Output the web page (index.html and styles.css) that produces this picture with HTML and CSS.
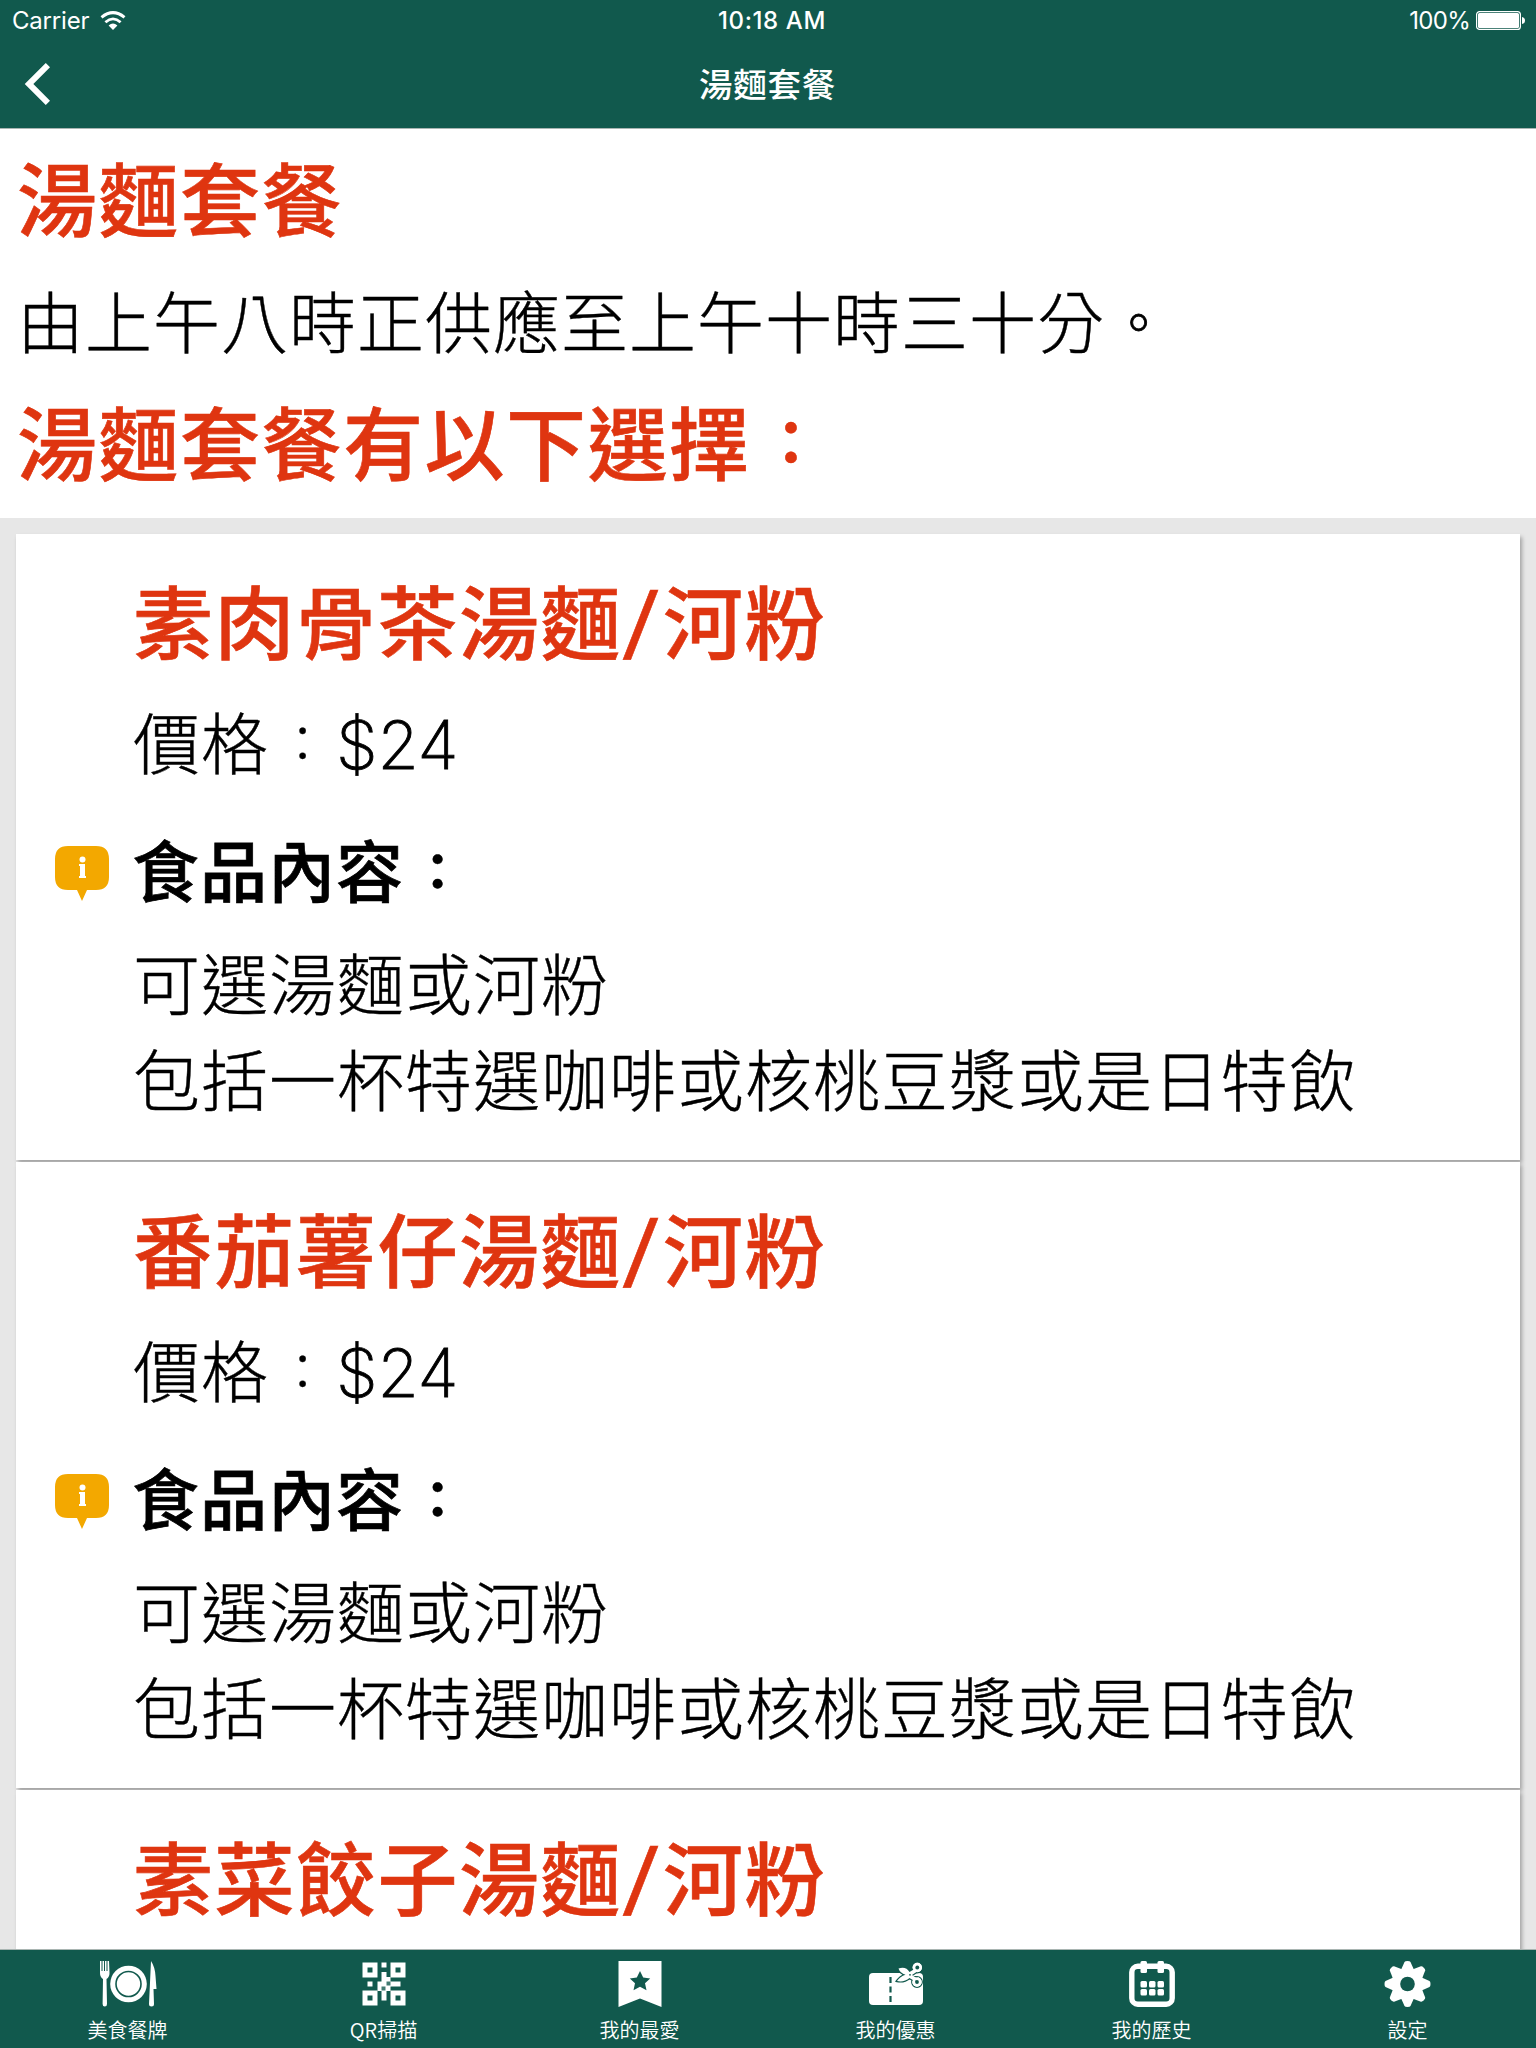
FILE: index.html
```html
<!DOCTYPE html>
<html lang="zh-Hant">
<head>
    <title>湯麵套餐</title>
    <meta charset="UTF-8">
    <link rel="stylesheet" href="styles.css">
</head>
<body>
    <header class="header">
        <div class="status-bar">
            <div class="status-left">
                <span class="carrier">Carrier</span>
                <svg class="wifi" width="26" height="20" viewBox="0 0 26 20">
                    <path d="M1.500 6.300Q13-3 24.500 6.300" fill="none" stroke="#fff" stroke-width="3"/>
                    <path d="M5.400 11.200Q13 4.600 20.600 11.200" fill="none" stroke="#fff" stroke-width="2.800"/>
                    <path d="M8.600 14.400Q13 10.400 17.400 14.400L13 19Z" fill="#fff"/>
                </svg>
            </div>
            <span class="clock">10:18 AM</span>
            <div class="status-right">
                <span class="percent">100%</span>
                <svg width="50" height="20" viewBox="0 0 50 20">
                    <rect x=".6" y=".6" width="43.800" height="17.800" rx="3" fill="none" stroke="#fff" stroke-width="1.200"/>
                    <rect x="2" y="2" width="41" height="15" rx="1.500" fill="#fff"/>
                    <path d="M46 6q3 .5 3 3.500T46 13z" fill="#fff"/>
                </svg>
            </div>
        </div>
        <div class="title-bar">
            <a href="#" class="back">
                <svg width="26" height="42" viewBox="0 0 26 42">
                    <path d="M23.900 2.200L5 21l18.900 18.800" fill="none" stroke="#fff" stroke-width="6"/>
                </svg>
            </a>
            <span class="title">湯麵套餐</span>
        </div>
    </header>

    <main class="content">
        <section class="intro">
            <h1>湯麵套餐</h1>
            <p>由上午八時正供應至上午十時三十分<span class="stop">。</span></p>
            <h1>湯麵套餐有以下選擇<span class="colon">：</span></h1>
        </section>

        <div class="list">
            <article class="card">
                <h2>素肉骨茶湯麵<span class="slash">/</span>河粉</h2>
                <p class="price">價格<span class="colon">：</span><span class="num">$24</span></p>
                <div class="label">
                    <svg class="info" width="56" height="58" viewBox="0 0 56 58">
                        <path d="M14 1H42Q55 1 55 14V32Q55 45 42 45H33L28 56L23 45H14Q1 45 1 32V14Q1 1 14 1Z" fill="#f3a800"/>
                        <circle cx="28.500" cy="14.500" r="3" fill="#fff"/>
                        <path d="M25 19H31V31H32V33H25V31H26V21H25Z" fill="#fff"/>
                    </svg>
                    <h3>食品內容<span class="colon">：</span></h3>
                </div>
                <p>可選湯麵或河粉<br>包括一杯特選咖啡或核桃豆漿或是日特飲</p>
            </article>

            <article class="card">
                <h2>番茄薯仔湯麵<span class="slash">/</span>河粉</h2>
                <p class="price">價格<span class="colon">：</span><span class="num">$24</span></p>
                <div class="label">
                    <svg class="info" width="56" height="58" viewBox="0 0 56 58">
                        <path d="M14 1H42Q55 1 55 14V32Q55 45 42 45H33L28 56L23 45H14Q1 45 1 32V14Q1 1 14 1Z" fill="#f3a800"/>
                        <circle cx="28.500" cy="14.500" r="3" fill="#fff"/>
                        <path d="M25 19H31V31H32V33H25V31H26V21H25Z" fill="#fff"/>
                    </svg>
                    <h3>食品內容<span class="colon">：</span></h3>
                </div>
                <p>可選湯麵或河粉<br>包括一杯特選咖啡或核桃豆漿或是日特飲</p>
            </article>

            <article class="card">
                <h2>素菜餃子湯麵<span class="slash">/</span>河粉</h2>
            </article>
        </div>
    </main>

    <nav class="tabs">
        <a href="#" class="tab">
            <svg width="58" height="48" viewBox="0 0 58 48">
                <g fill="#fff">
                    <path d="M1 1h1.500v10h1V1h1.500v10h1V1h1.500v10h1V1H10l.5 12q0 4-3 6l.5 25q0 2.500-2.200 2.500T3.600 44L4 19q-3-2-3-6z"/>
                    <path d="M52 1q4 6 4.500 15l1 13H54.500l.5 15q0 2.500-2.500 2.500T50 44z"/>
                    <circle cx="29.500" cy="24" r="18.300"/>
                </g>
                <circle cx="29.500" cy="24" r="12.500" fill="none" stroke="#11594d" stroke-width="1.600"/>
            </svg>
            <span>美食餐牌</span>
        </a>
        <a href="#" class="tab">
            <svg width="44" height="48" viewBox="0 0 44 48">
                <path fill="#fff" fill-rule="evenodd" d="M.5 2.500h15v15h-15zM5.500 7.500v5h5v-5zM28.500 2.500h15v15h-15zM33.500 7.500v5h5v-5zM.5 30.500h15v15h-15zM5.500 35.500v5h5v-5zM28.500 30.500h15v15h-15zM33.500 35.500v5h5v-5z"/>
                <path fill="#fff" d="M19.500 2.500h5v5h-5zM5.500 21.500h5v5h-5zM19.500 12h5v5h4v4.500h10v5H28.500v4.500h-4v9.500h-5v-9.500h-4v-9.500h4z"/>
                <path fill="#11594d" d="M19.500 26.500h4v4h-4zM24.500 21.500h4v4h-4z" opacity=".8"/>
            </svg>
            <span>QR掃描</span>
        </a>
        <a href="#" class="tab">
            <svg width="44" height="48" viewBox="0 0 44 48">
                <path fill="#fff" d="M.5 1h43v46L22 38.500.5 47z"/>
                <path fill="#11594d" d="M22 11l3.200 6.600 7 .8-5.200 4.900 1.500 7L22 26.700l-6.500 3.600 1.500-7-5.200-4.900 7-.8z"/>
            </svg>
            <span>我的最愛</span>
        </a>
        <a href="#" class="tab">
            <svg width="56" height="48" viewBox="0 0 56 48">
                <rect x="1" y="13" width="54" height="32" rx="4" fill="#fff"/>
                <path d="M22.500 17v26" stroke="#11594d" stroke-width="2.200" stroke-dasharray="6 3.500"/>
                <g fill="#fff" stroke="#11594d" stroke-width="2.400" paint-order="stroke">
                    <circle cx="49.300" cy="7.500" r="4.700"/>
                    <circle cx="49" cy="22" r="4.700"/>
                    <path d="M30.500 8.500Q38 6 41.500 12L46.500 9l2 3-4.500 3 4.500 3-2 3-5-3Q36 22.500 29 21 32 16.500 37.500 14.800 32 13 30.500 8.500z"/>
                </g>
                <g fill="none" stroke="#fff" stroke-width="2.800">
                    <circle cx="49.300" cy="7.500" r="3.300"/>
                    <circle cx="49" cy="22" r="3.300"/>
                </g>
                <circle cx="49.300" cy="7.500" r="1.900" fill="#11594d"/>
                <circle cx="49" cy="22" r="1.900" fill="#11594d"/>
                <circle cx="42" cy="14.800" r=".9" fill="#11594d"/>
            </svg>
            <span>我的優惠</span>
        </a>
        <a href="#" class="tab">
            <svg width="46" height="48" viewBox="0 0 46 48">
                <rect x="2.800" y="6.300" width="40.400" height="37.900" rx="6" fill="none" stroke="#fff" stroke-width="5.400"/>
                <g fill="#fff">
                    <rect x="11.500" y="1" width="6.500" height="12" rx="1.500"/>
                    <rect x="28.500" y="1" width="6.500" height="12" rx="1.500"/>
                    <rect x="11.500" y="21" width="6.500" height="6.500" rx="1.500"/>
                    <rect x="20" y="21" width="6.500" height="6.500" rx="1.500"/>
                    <rect x="28.500" y="21" width="6.500" height="6.500" rx="1.500"/>
                    <rect x="11.500" y="29" width="6.500" height="6.500" rx="1.500"/>
                    <rect x="20" y="29" width="6.500" height="6.500" rx="1.500"/>
                    <rect x="28.500" y="29" width="6.500" height="6.500" rx="1.500"/>
                </g>
            </svg>
            <span>我的歷史</span>
        </a>
        <a href="#" class="tab">
            <svg width="48" height="48" viewBox="-23.500 -24 48 48">
                <g fill="#fff">
                    <circle r="15.500"/>
                    <path id="tooth" d="M-7-13L-3-22Q-2.500-23 0-23T3-22L7-13z"/>
                    <use href="#tooth" transform="rotate(45)"/>
                    <use href="#tooth" transform="rotate(90)"/>
                    <use href="#tooth" transform="rotate(135)"/>
                    <use href="#tooth" transform="rotate(180)"/>
                    <use href="#tooth" transform="rotate(225)"/>
                    <use href="#tooth" transform="rotate(270)"/>
                    <use href="#tooth" transform="rotate(315)"/>
                </g>
                <circle r="7.300" fill="#11594d"/>
            </svg>
            <span>設定</span>
        </a>
    </nav>
</body>
</html>
```
FILE: styles.css
```css
* {
    margin: 0;
    padding: 0;
    box-sizing: border-box;
}

body {
    font-family: 'Noto Sans CJK TC', sans-serif;
    background: #fff;
    color: #000;
    height: 2048px;
    display: flex;
    flex-direction: column;
    overflow: hidden;
}

svg {
    display: block;
}

.header {
    background: #11594d;
    color: #fff;
    height: 129px;
    border-bottom: 1px solid #a9b5b2;
    flex-shrink: 0;
}

.status-bar {
    display: grid;
    grid-template-columns: 1fr auto 1fr;
    align-items: center;
    height: 41px;
    padding: 0 10px 0 12px;
    font-family: Inter, sans-serif;
    font-size: 24px;
}

.status-left,
.status-right {
    display: flex;
    align-items: center;
}

.status-left {
    gap: 11px;
}

.status-right {
    justify-content: flex-end;
    gap: 6px;
}

.carrier {
    letter-spacing: -0.2px;
}

.percent {
    letter-spacing: -0.7px;
}

.clock {
    padding-left: 6px;
    font-weight: 500;
    letter-spacing: 0.6px;
}

.title-bar {
    display: grid;
    grid-template-columns: 1fr auto 1fr;
    align-items: center;
    height: 86px;
    padding: 0 25px 0 24px;
}

.title {
    font-size: 33.500px;
    font-weight: 500;
    line-height: 84px;
    height: 86px;
    letter-spacing: 0.7px;
}

.content {
    flex: 1;
    min-height: 0;
    overflow: hidden;
}

.intro {
    height: 389px;
    padding: 6px 17px 0;
}

h1,
h2 {
    color: #df3510;
    font-size: 80px;
    font-weight: 500;
    line-height: 120px;
    letter-spacing: 1.500px;
    -webkit-text-stroke: 0.6px;
}

p {
    font-size: 67px;
    font-weight: 300;
    line-height: 96px;
    letter-spacing: 1px;
    -webkit-text-stroke: 0.4px;
}

.intro p {
    margin: 16px 0 12px;
}

.colon,
.stop {
    display: inline-block;
    width: 1em;
    line-height: 1;
    text-align: center;
}

.colon {
    transform: scale(0.75);
}

h1 .colon,
h3 .colon {
    font-weight: 700;
}

.stop {
    transform: scale(0.82);
    -webkit-text-stroke: 1px;
}

.list {
    background: #e7e7e7;
    padding: 16px;
}

.card {
    background: #fff;
    height: 626px;
    margin-bottom: 2px;
    padding: 24px 0 0 117px;
    box-shadow: 2px 3px 4px rgba(0, 0, 0, 0.3);
}

.price {
    margin-top: 14px;
}

.num {
    font-family: Inter, sans-serif;
    font-weight: 200;
    letter-spacing: -0.2px;
    -webkit-text-stroke: 0.9px;
}

.slash {
    display: inline-block;
    width: 41px;
    font-family: Inter, sans-serif;
    line-height: 1;
    text-align: center;
    transform: translate(-1px, -2px) skewX(-7deg);
}

.label {
    display: flex;
    align-items: center;
    margin: 27px 0 17px -79px;
}

.info {
    margin-top: 12px;
}

.label h3 {
    margin-left: 22px;
    font-size: 67px;
    font-weight: 500;
    line-height: 96px;
    letter-spacing: 1px;
    -webkit-text-stroke: 0.7px;
}

.tabs {
    display: grid;
    grid-template-columns: repeat(6, 1fr);
    height: 99px;
    background: #11594d;
    border-top: 1px solid #a9b5b2;
    flex-shrink: 0;
    z-index: 1;
}

.tab {
    display: flex;
    flex-direction: column;
    align-items: center;
    padding: 10px 1px 0 0;
    color: #fff;
    font-size: 20px;
    font-weight: 350;
    line-height: 44px;
    text-decoration: none;
}
```
